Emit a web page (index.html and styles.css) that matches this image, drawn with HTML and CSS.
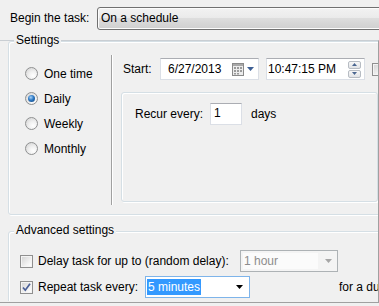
FILE: index.html
```html
<!DOCTYPE html>
<html>
<head>
<meta charset="utf-8">
<link rel="stylesheet" href="styles.css">
</head>
<body>
<div class="top">
  <span class="top-lbl">Begin the task:</span>
  <div class="combo-btn">On a schedule</div>
</div>
<div class="page">
  <div class="page-inner">
  <div class="group settings">
    <span class="legend">Settings</span>
    <div class="settings-body">
      <div class="radios">
        <div class="radio-row"><span class="radio"></span><span>One time</span></div>
        <div class="radio-row"><span class="radio on"></span><span>Daily</span></div>
        <div class="radio-row"><span class="radio"></span><span>Weekly</span></div>
        <div class="radio-row"><span class="radio"></span><span>Monthly</span></div>
      </div>
      <div class="sep"></div>
      <div class="right">
        <div class="start-row">
          <span class="start-lbl">Start:</span>
          <div class="field datebox">
            <span>6/27/2013</span>
            <svg class="cal" width="12" height="13" viewBox="0 0 12 13">
              <rect x="0.5" y="0.5" width="11" height="12" fill="#ececec" stroke="#8a8a8a"/>
              <rect x="1" y="1" width="10" height="2" fill="#a8a8a8"/>
              <g fill="#9a9a9a">
                <rect x="2" y="4" width="2" height="2"/><rect x="5" y="4" width="2" height="2"/><rect x="8" y="4" width="2" height="2"/>
                <rect x="2" y="7" width="2" height="2"/><rect x="5" y="7" width="2" height="2"/><rect x="8" y="7" width="2" height="2"/>
                <rect x="2" y="10" width="2" height="1.5"/><rect x="5" y="10" width="2" height="1.5"/>
              </g>
            </svg>
            <svg class="arrow" width="7" height="4" viewBox="0 0 7 4"><path d="M0 0H7L3.5 4Z" fill="#3d5f94"/></svg>
          </div>
          <div class="field timebox">
            <span>10:47:15 PM</span>
            <div class="spin">
              <div class="spin-btn"><svg width="5" height="3" viewBox="0 0 5 3"><path d="M0 3H5L2.5 0Z" fill="#4a6690"/></svg></div>
              <div class="spin-btn"><svg width="5" height="3" viewBox="0 0 5 3"><path d="M0 0H5L2.5 3Z" fill="#4a6690"/></svg></div>
            </div>
          </div>
          <span class="check"></span>
        </div>
        <div class="frame">
          <div class="recur-row">
            <span class="recur-lbl">Recur every:</span>
            <div class="field numbox">1</div>
            <span class="days">days</span>
          </div>
        </div>
      </div>
    </div>
  </div>
  <div class="group adv">
    <span class="legend">Advanced settings</span>
    <div class="adv-row">
      <span class="check"></span>
      <span class="lbl-delay">Delay task for up to (random delay):</span>
      <div class="dd dd-disabled"><span class="dd-text">1 hour</span><svg width="7" height="4" viewBox="0 0 7 4"><path d="M0 0H7L3.5 4Z" fill="#a6a6a6"/></svg></div>
    </div>
    <div class="adv-row second">
      <span class="check checked"><svg width="11" height="11" viewBox="0 0 11 11"><path d="M2 5.5L4.3 8.2L9 1.8" fill="none" stroke="#4a5f97" stroke-width="1.7"/></svg></span>
      <span class="lbl-repeat">Repeat task every:</span>
      <div class="dd dd-focus"><span class="sel">5 minutes</span><svg width="7" height="4" viewBox="0 0 7 4"><path d="M0 0H7L3.5 4Z" fill="#000"/></svg></div>
      <span class="for">for a duration of:</span>
    </div>
  </div>
  </div>
</div>
</body>
</html>
```
FILE: styles.css
```css
html, body {
  margin: 0;
  padding: 0;
}
body {
  width: 379px;
  height: 306px;
  overflow: hidden;
  background: #f0f0f0;
  font-family: "Liberation Sans", Arial, sans-serif;
  font-size: 12px;
  color: #000;
}
.top {
  display: flex;
  align-items: flex-start;
  height: 40px;
  box-sizing: border-box;
  padding: 7px 0 0 10px;
}
.top-lbl {
  width: 87px;
  flex: none;
  line-height: 23px;
}
.combo-btn {
  flex: none;
  width: 300px;
  height: 23px;
  box-sizing: border-box;
  border: 1px solid #707070;
  border-radius: 3px;
  box-shadow: inset 0 0 0 1px #fcfcfc;
  background: linear-gradient(#f2f2f2 0%, #ebebeb 45%, #dddddd 50%, #cfcfcf 100%);
  padding-left: 3px;
  line-height: 21px;
}
.page {
  height: 263px;
  box-sizing: border-box;
  border-top: 1px solid #c9ced3;
  border-right: 1px solid #a0a0a0;
  border-bottom: 1px solid #a0a0a0;
}
.page-inner {
  height: 269px;
  margin-top: -9px;
  padding-top: 9px;
  box-sizing: border-box;
  overflow: hidden;
}
.group {
  position: relative;
  margin-left: 8px;
  width: 380px;
  box-sizing: border-box;
  border: 1px solid #d5dfe5;
  border-radius: 3px;
  box-shadow: inset 1px 1px 0 #fff, 1px 1px 0 #fff;
}
.legend {
  position: absolute;
  left: 5px;
  top: -9px;
  padding: 0 2px;
  line-height: 15px;
  background: #f0f0f0;
}
.settings {
  height: 174px;
}
.settings-body {
  display: flex;
  padding-top: 13px;
}
.radios {
  width: 102px;
  flex: none;
  box-sizing: border-box;
  padding: 6px 0 0 16px;
}
.radio-row {
  display: flex;
  align-items: center;
  gap: 6px;
  height: 25px;
}
.radio {
  position: relative;
  width: 13px;
  height: 13px;
  flex: none;
  box-sizing: border-box;
  border-radius: 50%;
  border: 1px solid #8f9091;
  background: radial-gradient(circle at 65% 70%, #ffffff 0%, #f0f0f0 40%, #cfcfcf 100%);
}
.radio.on::after {
  content: "";
  position: absolute;
  left: 2px;
  top: 2px;
  width: 7px;
  height: 7px;
  border-radius: 50%;
  background: radial-gradient(circle at 40% 35%, #a9d3f7 0%, #2c78c4 45%, #123f73 100%);
}
.sep {
  width: 1px;
  height: 150px;
  flex: none;
  background: #a0a0a0;
  border-right: 1px solid #fff;
}
.right {
  flex: none;
  padding-left: 8px;
}
.start-row {
  display: flex;
  align-items: center;
  height: 22px;
  margin: 3px 0 0 2px;
}
.start-lbl {
  width: 37px;
  flex: none;
}
.field {
  flex: none;
  height: 22px;
  box-sizing: border-box;
  border: 1px solid #dbdfe6;
  border-top-color: #abadb3;
  background: #fff;
  display: flex;
  align-items: center;
}
.datebox {
  width: 99px;
  padding: 0 4px 0 7px;
}
.cal {
  margin-left: auto;
  margin-right: 3px;
}
.timebox {
  width: 99px;
  margin-left: 7px;
  padding: 0 3px 0 1px;
  justify-content: space-between;
}
.spin {
  display: flex;
  flex-direction: column;
  gap: 1px;
}
.spin-btn {
  width: 13px;
  height: 8px;
  box-sizing: border-box;
  border: 1px solid #b7bcc3;
  border-radius: 2px;
  background: linear-gradient(#f7f7f7, #e1e3e6);
  display: flex;
  align-items: center;
  justify-content: center;
}
.check {
  position: relative;
  width: 13px;
  height: 13px;
  flex: none;
  box-sizing: border-box;
  border: 1px solid #8f8f8f;
  box-shadow: inset 0 0 0 1px #f4f4f4;
  background: linear-gradient(135deg, #d2d2d2 0%, #f5f5f5 70%, #ffffff 100%);
  display: flex;
  align-items: center;
  justify-content: center;
}
.start-row .check {
  margin-left: 7px;
}
.frame {
  margin-top: 12px;
  width: 257px;
  height: 110px;
  box-sizing: border-box;
  border: 1px solid #d5dfe5;
  border-radius: 3px;
  box-shadow: inset 1px 1px 0 #fff, 1px 1px 0 #fff;
  padding: 10px 0 0 13px;
}
.recur-row {
  display: flex;
  align-items: center;
}
.recur-lbl {
  width: 75px;
  flex: none;
}
.numbox {
  width: 32px;
  padding-left: 3px;
  align-items: flex-start;
  padding-top: 2px;
}
.days {
  margin-left: 9px;
}
.adv {
  margin-top: 16px;
  height: 100px;
  padding: 18px 0 0 11px;
}
.adv-row {
  display: flex;
  align-items: center;
  height: 22px;
  white-space: nowrap;
}
.adv-row.second {
  margin-top: 4px;
}
.adv-row .check {
  margin-right: 5px;
}
.lbl-delay {
  width: 202px;
  flex: none;
}
.lbl-repeat {
  width: 107px;
  flex: none;
}
.dd {
  flex: none;
  height: 22px;
  box-sizing: border-box;
  display: flex;
  align-items: center;
}
.dd-disabled {
  width: 98px;
  border: 1px solid #adb2b5;
  background: #f4f4f4;
  padding: 2px 5px 2px 2px;
  justify-content: space-between;
}
.dd-text {
  width: 75px;
  height: 16px;
  line-height: 16px;
  background: #fbfbfb;
  color: #8d8d8d;
  padding-left: 1px;
  box-sizing: border-box;
}
.dd-focus {
  width: 105px;
  border: 1px solid #7eb4ea;
  background: #fff;
  padding: 0 6px 0 1px;
  justify-content: space-between;
}
.sel {
  background: #3399ff;
  color: #fff;
  line-height: 16px;
  height: 16px;
  padding: 0 1px;
}
.for {
  margin-left: 89px;
}
```
